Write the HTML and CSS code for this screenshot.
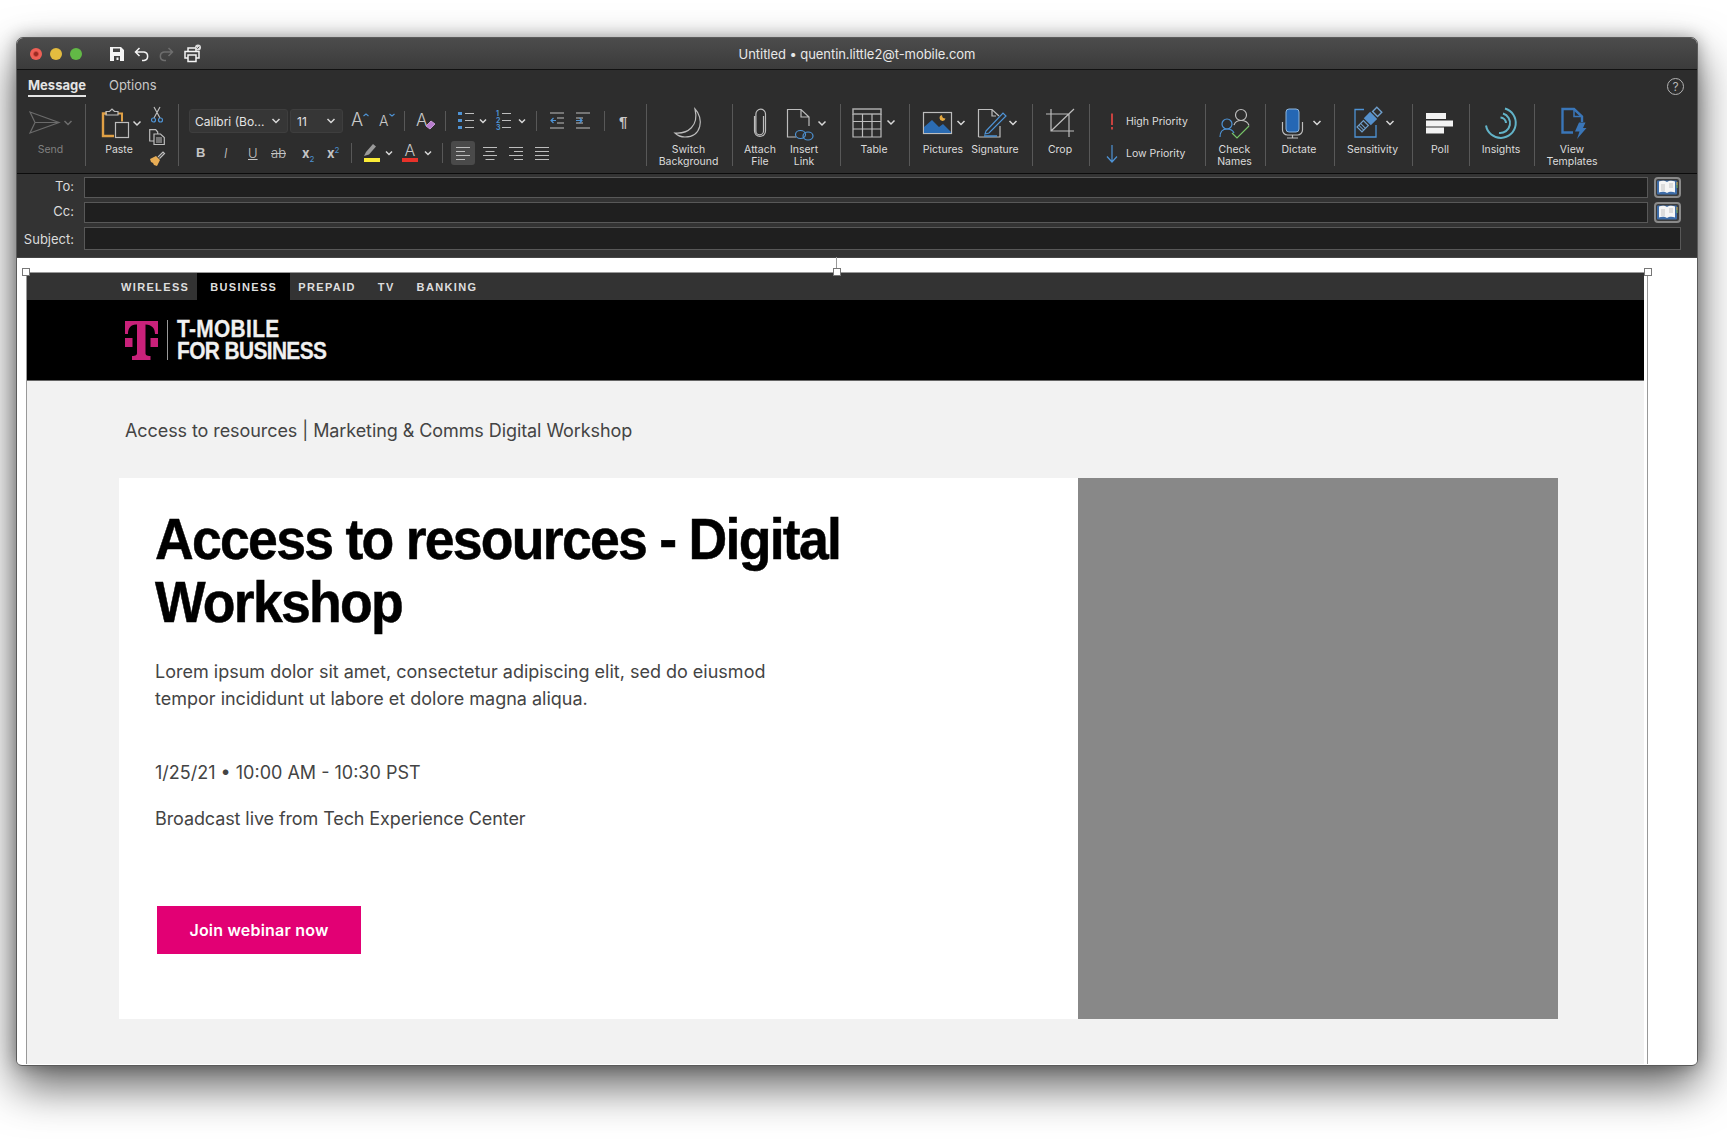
FILE: index.html
```html
<!DOCTYPE html>
<html lang="en">

<head>
    <meta charset="UTF-8">
    <title>Untitled</title>
    <link rel="stylesheet" href="styles.css">
</head>

<body>
    <div class="window">
        <!-- title bar -->
        <div class="titlebar">
            <div class="lights">
                <span class="light red"></span>
                <span class="light yellow"></span>
                <span class="light green"></span>
            </div>
            <div class="quick">
                <svg class="q-save" width="14" height="14" viewBox="0 0 14 14"><path fill="#f4f4f4" fill-rule="evenodd" d="M0 0h11l3 3v11H0zM3 1.500v3.500h7V1.500zM4 9v5h6V9z"/><rect x="6.500" y="10.500" width="2" height="2.500" fill="#f4f4f4"/></svg>
                <svg class="q-undo" width="16" height="14" viewBox="0 0 16 14"><path class="q-line" d="M5.500 1 1.500 5l4 4M1.500 5H10a4.300 4.300 0 0 1 0 8.500H8"/></svg>
                <svg class="q-redo" width="16" height="14" viewBox="0 0 16 14"><path class="q-line dim" d="M10.500 1l4 4-4 4M14.500 5H6a4.300 4.300 0 0 0 0 8.500h2"/></svg>
                <svg class="q-print" width="18" height="19" viewBox="0 0 18 19"><path class="q-line" d="M4 7V4h8v3M4 14H1V7.500h14V14h-3M4 11h8v6.500H4z"/><circle cx="14" cy="3.500" r="3" fill="#ddd"/><path d="M12.600 3.500l1 1 1.600-1.800" fill="none" stroke="#333" stroke-width=".9"/></svg>
            </div>
            <div class="title">Untitled • quentin.little2@t-mobile.com</div>
        </div>

        <!-- ribbon tabs -->
        <div class="tabs">
            <span class="tab active">Message</span>
            <span class="tab">Options</span>
            <span class="help">?</span>
        </div>

        <!-- ribbon -->
        <div class="ribbon">
            <div class="group g-send">
                <div class="tool w-full dim-label">
                    <svg width="67" height="30" viewBox="0 0 67 30"><path class="ln dim" d="M13 4l29 10.500L13 25l5-10.500zM18 14.500h24"/><path class="chev dim" d="M47.500 13l3.500 3.500 3.500-3.500"/></svg>
                    <span class="label">Send</span>
                </div>
            </div>

            <div class="group g-paste">
                <div class="tool w-paste">
                    <svg width="58" height="30" viewBox="0 0 58 30">
                        <path d="M17 5.500H13V28H24" fill="none" stroke="#e0a045" stroke-width="2.400"/>
                        <path d="M28 5.500h4v8" fill="none" stroke="#e0a045" stroke-width="2"/>
                        <path class="ln" d="M16 7V3.500h3.500L22 1l2.500 2.500H28V7z"/>
                        <rect class="ln" x="25.500" y="14.500" width="13" height="15"/>
                        <path class="chev" d="M43.500 13.500l3.500 3.500 3.500-3.500"/>
                    </svg>
                    <span class="label">Paste</span>
                </div>
                <div class="side">
                    <svg width="16" height="16" viewBox="0 0 16 16"><path class="ln" d="M5 0l6 11M11 0L5 11"/><circle class="ln-blue" cx="4.500" cy="13" r="2"/><circle class="ln-blue" cx="11.500" cy="13" r="2"/></svg>
                    <svg width="16" height="16" viewBox="0 0 16 16"><path class="ln" d="M5 12H.7V.7h6l2 2.300v2M5 5h6.500l3.800 3.500v7H5zM7 9h6M7 11h6M7 13h6"/></svg>
                    <svg width="16" height="16" viewBox="0 0 16 16"><path d="M1 8l6-3 4 4-3 6-3-1-1-2-2-1z" fill="#e8ad55"/><path class="ln" d="M9 6l5-5 1.500 1.500-5 5"/></svg>
                </div>
            </div>

            <!-- font and paragraph block -->
            <div class="group g-font">
                <div class="row">
                    <div class="select s-font">Calibri (Bo...<svg class="sel-chev" width="8" height="6" viewBox="0 0 8 6"><path class="chev" d="M.5 1l3.500 3.500L7.500 1"/></svg></div>
                    <div class="select s-size">11<svg class="sel-chev" width="8" height="6" viewBox="0 0 8 6"><path class="chev" d="M.5 1l3.500 3.500L7.500 1"/></svg></div>
                    <svg class="a-grow" width="28" height="24" viewBox="0 0 28 24"><text class="glyph-a" x="0" y="17" font-size="18">A</text><path class="chev-blue" d="M12.500 7l2.500-2 2.500 2"/></svg>
                    <svg width="25" height="24" viewBox="0 0 25 24"><text class="glyph-a" x="0" y="17" font-size="14">A</text><path class="chev-blue" d="M10.500 5l2.500 2 2.500-2"/></svg>
                    <span class="vsep"></span>
                    <svg width="40" height="24" viewBox="0 0 40 24"><text class="glyph-a" x="11" y="17" font-size="17">A</text><path d="M21 17l5-5 4 3-5 5z" fill="#b77ccd" stroke="#c79ad8" stroke-width="1"/></svg>
                    <span class="vsep"></span>
                    <svg width="50" height="24" viewBox="0 0 50 24">
                        <path d="M12 3h4v3h-4zM12 10h4v3h-4zM12 17h4v3h-4z" fill="#4e93d5"/>
                        <path class="ln" d="M19 4.500h9M19 11.500h9M19 18.500h9"/>
                        <path class="chev" d="M34 10.500l3 3 3-3"/>
                    </svg>
                    <svg width="40" height="24" viewBox="0 0 40 24">
                        <text class="num-blue" x="0" y="7">1</text><text class="num-blue" x="0" y="14">2</text><text class="num-blue" x="0" y="21">3</text>
                        <path class="ln" d="M6 4.500h9M6 11.500h9M6 18.500h9"/>
                        <path class="chev" d="M23 10.500l3 3 3-3"/>
                    </svg>
                    <span class="vsep"></span>
                    <svg width="39" height="24" viewBox="0 0 39 24">
                        <path class="ln" d="M13 4h14M20 9h7M20 14h7M13 19h14"/>
                        <path class="ln-blue" d="M19 11.500h-5M16.500 9l-2.500 2.500 2.500 2.500"/>
                    </svg>
                    <svg width="28" height="24" viewBox="0 0 28 24">
                        <path class="ln" d="M0 4h14M7 9h7M7 14h7M0 19h14" transform="matrix(-1 0 0 1 14 0)"/>
                        <path class="ln-blue" d="M0 11.500h6M3.500 9L6 11.500 3.500 14"/>
                    </svg>
                    <span class="vsep"></span>
                    <span class="pilcrow">¶</span>
                </div>
                <div class="row row-2">
                    <span class="fmt f-b">B</span>
                    <span class="fmt f-i">I</span>
                    <span class="fmt f-u">U</span>
                    <span class="fmt f-s">ab</span>
                    <span class="fmt f-x">x<sub>2</sub></span>
                    <span class="fmt f-x2">x<sup>2</sup></span>
                    <span class="vsep"></span>
                    <svg width="50" height="24" viewBox="0 0 50 24">
                        <path d="M12 15l2-4 7-8 3 2.500-7 8z" fill="#9a9a9a"/>
                        <rect x="12" y="17" width="16" height="4" fill="#fbec37"/>
                        <path class="chev" d="M34 10.500l3 3 3-3"/>
                    </svg>
                    <svg width="40" height="24" viewBox="0 0 40 24">
                        <text class="glyph-a" x="2.500" y="15" font-size="16">A</text>
                        <rect y="17" width="16" height="4" fill="#e8322a"/>
                        <path class="chev" d="M23 10.500l3 3 3-3"/>
                    </svg>
                    <span class="vsep"></span>
                    <span class="align first on"><svg width="14" height="14" viewBox="0 0 14 14"><path class="ln" d="M0 1.500h14M0 5.500h9M0 9.500h14M0 13.500h9"/></svg></span>
                    <span class="align"><svg width="14" height="14" viewBox="0 0 14 14"><path class="ln" d="M0 1.500h14M2.500 5.500h9M0 9.500h14M2.500 13.500h9"/></svg></span>
                    <span class="align"><svg width="14" height="14" viewBox="0 0 14 14"><path class="ln" d="M0 1.500h14M5 5.500h9M0 9.500h14M5 13.500h9"/></svg></span>
                    <span class="align"><svg width="14" height="14" viewBox="0 0 14 14"><path class="ln" d="M0 1.500h14M0 5.500h14M0 9.500h14M0 13.500h14"/></svg></span>
                </div>
            </div>

            <div class="group g-bg">
                <div class="tool w-full">
                    <svg width="85" height="30" viewBox="0 0 85 30"><path class="ln" d="M49 1c9 9 7 28-10 28-4 0-8-2-10-4 13 1 24-7 20-24z"/></svg>
                    <span class="label">Switch<br>Background</span>
                </div>
            </div>

            <div class="group g-attach">
                <div class="tool w-44">
                    <svg width="44" height="30" viewBox="0 0 44 30"><path class="ln" d="M25.500 8v15a3.800 3.800 0 0 1-7.600 0V6a4.800 4.800 0 0 1 9.600 0v17a5.500 5.500 0 0 1-11 0V8"/></svg>
                    <span class="label">Attach<br>File</span>
                </div>
                <div class="tool w-44">
                    <svg width="44" height="30" viewBox="0 0 44 30">
                        <path class="ln" d="M14 29H5.500V1.500H19L27 9v9M19 1.500V9h8"/>
                        <ellipse class="ln-blue" cx="18.500" cy="26.500" rx="5" ry="4"/>
                        <ellipse class="ln-blue" cx="26" cy="28" rx="5" ry="4"/>
                        <path class="chev" d="M36.500 13.500l3.500 3.500 3.500-3.500"/>
                    </svg>
                    <span class="label">Insert<br>Link</span>
                </div>
            </div>

            <div class="group g-table">
                <div class="tool w-full">
                    <svg width="68" height="30" viewBox="0 0 68 30">
                        <rect x="13" y="1" width="28" height="5" fill="none" stroke="#aaa" stroke-width="1.500"/>
                        <path class="ln" d="M13 6v23h28V6M13 13.500h28M13 21h28M22.500 6v23M32 6v23"/>
                        <path class="chev" d="M47.500 12.500l3.500 3.500 3.500-3.500"/>
                    </svg>
                    <span class="label">Table</span>
                </div>
            </div>

            <div class="group g-pict">
                <div class="tool w-52">
                    <svg width="52" height="30" viewBox="0 0 52 30">
                        <rect class="ln" x="6.500" y="4.500" width="28" height="21"/>
                        <path d="M7 25V19l8-7 7 7 4-3 8 8v1z" fill="#2b6cb3"/>
                        <path d="M25 7a3 3 0 1 0 3.500 3.500A3.500 3.500 0 0 1 25 7z" fill="#e6a93f"/>
                        <path class="chev" d="M40.500 13l3.500 3.500 3.500-3.500"/>
                    </svg>
                    <span class="label">Pictures</span>
                </div>
                <div class="tool w-52">
                    <svg width="52" height="30" viewBox="0 0 52 30">
                        <path class="ln" d="M9.500 29V1.500H23L30 8M23 1.500V8h4M31 18v11H9.500"/>
                        <path class="ln-blue" d="M17 23l17-18 3 3-17 17-4 1z"/>
                        <path d="M15 28h13" stroke="#4e93d5" stroke-width="1.500"/>
                        <path class="chev" d="M40.500 13l3.500 3.500 3.500-3.500"/>
                    </svg>
                    <span class="label">Signature</span>
                </div>
            </div>

            <div class="group g-crop">
                <div class="tool w-full">
                    <svg width="56" height="30" viewBox="0 0 56 30"><path class="ln" d="M19 1v22h23M14 6h23v23M19 23L42 1"/></svg>
                    <span class="label">Crop</span>
                </div>
            </div>

            <div class="group g-prio">
                <div class="prio">
                    <svg width="16" height="20" viewBox="0 0 16 20"><path d="M8 1.500v11.500M8 15v2.500" stroke="#c8423f" stroke-width="2"/></svg>
                    <span class="label">High Priority</span>
                </div>
                <div class="prio">
                    <svg width="16" height="20" viewBox="0 0 16 20"><path class="ln-blue" d="M8 1v17M3 12.500 8 18l5-5.500"/></svg>
                    <span class="label">Low Priority</span>
                </div>
            </div>

            <div class="group g-check">
                <div class="tool w-full">
                    <svg width="59" height="30" viewBox="0 0 59 30">
                        <circle class="ln-blue" cx="22" cy="16" r="5"/>
                        <path class="ln-blue" d="M15 29c0-6 3-8 7-8s6 1.500 7 4"/>
                        <circle class="ln" cx="36" cy="7" r="5.500"/>
                        <path class="ln" d="M29 17c1-3 3-4.500 7-4.500s7 2 8 5"/>
                        <path d="M27 25l5 5 12-12" fill="none" stroke="#76c267" stroke-width="1.200"/>
                    </svg>
                    <span class="label">Check<br>Names</span>
                </div>
            </div>

            <div class="group g-dict">
                <div class="tool w-full">
                    <svg width="68" height="30" viewBox="0 0 68 30">
                        <rect x="21" y="1" width="13" height="23" rx="3" fill="#2567b4" stroke="#8fb6dc" stroke-width="1"/>
                        <path class="ln" d="M17.500 14v8a5 5 0 0 0 5 5h10a5 5 0 0 0 5-5v-8M27.500 27v3M22 30h11"/>
                        <path class="chev" d="M48.500 13l3.500 3.500 3.500-3.500"/>
                    </svg>
                    <span class="label">Dictate</span>
                </div>
            </div>

            <div class="group g-sens">
                <div class="tool w-full">
                    <svg width="77" height="30" viewBox="0 0 77 30">
                        <path d="M30 1.500h-9v27.500h21V17" fill="none" stroke="#4e93d5" stroke-width="1.300"/>
                        <g transform="rotate(-45 34 13)">
                            <rect x="22" y="9.500" width="9" height="7" fill="none" stroke="#6f9fcc" stroke-width="1.200"/>
                            <path d="M24.500 9.500v7M27 9.500v7" stroke="#6f9fcc" stroke-width="1"/>
                            <rect x="33" y="8" width="9" height="10" fill="#5591cd"/>
                            <rect x="44" y="9.500" width="6" height="7" fill="none" stroke="#6f9fcc" stroke-width="1.400"/>
                        </g>
                        <path class="chev" d="M52.500 13l3.500 3.500 3.500-3.500"/>
                    </svg>
                    <span class="label">Sensitivity</span>
                </div>
            </div>

            <div class="group g-poll">
                <div class="tool w-full">
                    <svg width="56" height="30" viewBox="0 0 56 30"><path d="M14 5h20v6H14zM14 12.500h27v6H14zM14 19.500h18v6H14z" fill="#f2f2f2"/></svg>
                    <span class="label">Poll</span>
                </div>
            </div>

            <div class="group g-insi">
                <div class="tool w-full">
                    <svg width="64" height="30" viewBox="0 0 64 30">
                        <path class="teal" d="M36 .500A15 15 0 1 1 17 17.500"/>
                        <path class="teal" d="M34 5.500A10 10 0 0 1 30 25"/>
                        <path class="teal" d="M31.500 9.500A6 6 0 0 1 37 15"/>
                    </svg>
                    <span class="label">Insights</span>
                </div>
            </div>

            <div class="group g-view last">
                <div class="tool w-full">
                    <svg width="75" height="30" viewBox="0 0 75 30">
                        <path d="M38 24.500H27.500V1H39l8 7.500V14" fill="none" stroke="#3a76b8" stroke-width="2.400"/>
                        <path d="M39 1v7.500h8" fill="none" stroke="#3a76b8" stroke-width="1.500"/>
                        <path d="M44 14.500h6.500L48 20h3.500L42 31l2.500-7.500H40z" fill="#3a76b8"/>
                    </svg>
                    <span class="label">View<br>Templates</span>
                </div>
            </div>
        </div>

        <!-- address fields -->
        <div class="address">
            <div class="addr-row">
                <label>To:</label>
                <div class="field"></div>
                <div class="book"><svg width="21" height="15" viewBox="0 0 21 15"><rect width="20" height="14" y=".500" rx="1" fill="#3d6ca8"/><path d="M2 1.500c2.500-1 6-1 8 .500v11c-2-1.500-5.500-1.500-8-.500zM10 2c2-1.500 5.500-1.500 8-.500v11c-2.500-1-6-1-8 .500z" fill="#f5f5f5"/><path d="M4 4h4v7H4zM12 3h4v5h-4z" fill="#dcdcdc"/><path d="M20 2v3" stroke="#d7b54a"/><path d="M20 5v3" stroke="#74b25a"/></svg></div>
            </div>
            <div class="addr-row">
                <label>Cc:</label>
                <div class="field"></div>
                <div class="book"><svg width="21" height="15" viewBox="0 0 21 15"><rect width="20" height="14" y=".500" rx="1" fill="#3d6ca8"/><path d="M2 1.500c2.500-1 6-1 8 .500v11c-2-1.500-5.500-1.500-8-.500zM10 2c2-1.500 5.500-1.500 8-.500v11c-2.500-1-6-1-8 .500z" fill="#f5f5f5"/><path d="M4 4h4v7H4zM12 3h4v5h-4z" fill="#dcdcdc"/><path d="M20 2v3" stroke="#d7b54a"/><path d="M20 5v3" stroke="#74b25a"/></svg></div>
            </div>
            <div class="addr-row subject">
                <label>Subject:</label>
                <div class="field"></div>
            </div>
        </div>

        <!-- message body -->
        <div class="compose">
            <div class="frame">
                <span class="handle h-left"></span>
                <span class="handle h-mid"></span>
                <span class="handle h-right"></span>
                <div class="email">
                    <div class="nav">
                        <span class="nav-item first">WIRELESS</span>
                        <span class="nav-item active">BUSINESS</span>
                        <span class="nav-item">PREPAID</span>
                        <span class="nav-item">TV</span>
                        <span class="nav-item">BANKING</span>
                    </div>
                    <div class="brand">
                        <svg class="t-mark" width="33" height="39" viewBox="0 0 33 39"><path d="M0 0h33v13h-3c0-6-3-9-9.500-9.500V32c0 2 1 3 5 3v4H7v-4c4 0 5-1 5-3V3.500C6 3 3 7 3 13H0z" fill="#c9217a"/><path d="M0 17h7.500v9H0zM25.500 17H33v9h-7.500z" fill="#c9217a"/></svg>
                        <span class="brand-line"></span>
                        <div class="brand-name"><span class="brand-top">T-MOBILE</span><span class="brand-bottom">FOR BUSINESS</span></div>
                    </div>
                    <div class="content">
                        <p class="preheader">Access to resources | Marketing &amp; Comms Digital Workshop</p>
                        <div class="card">
                            <div class="card-text">
                                <h1>Access to resources - Digital Workshop</h1>
                                <p class="lead">Lorem ipsum dolor sit amet, consectetur adipiscing elit, sed do eiusmod tempor incididunt ut labore et dolore magna aliqua.</p>
                                <p class="when">1/25/21 • 10:00 AM - 10:30 PST</p>
                                <p class="where">Broadcast live from Tech Experience Center</p>
                                <a class="join" href="#">Join webinar now</a>
                            </div>
                            <div class="card-image"></div>
                        </div>
                    </div>
                </div>
            </div>
        </div>
    </div>
</body>

</html>
```

FILE: styles.css
```css
* {
    box-sizing: border-box;
}

body {
    margin: 0;
    height: 1139px;
    overflow: hidden;
    background-color: #fff;
    font-family: "Inter", "Liberation Sans", sans-serif;
}

svg {
    display: block;
    overflow: visible;
    flex: none;
}

/* svg stroke helpers */
.ln, .ln-blue, .chev, .chev-blue, .teal {
    fill: none;
}

.ln {
    stroke: #bdbdbd;
    stroke-width: 1.2;
}

.ln.dim {
    stroke: #6a6a6a;
}

.ln-blue {
    stroke: #4e93d5;
    stroke-width: 1.2;
}

.chev {
    stroke: #d8d8d8;
    stroke-width: 1.5;
}

.chev.dim {
    stroke: #6e6e6e;
}

.chev-blue {
    stroke: #4e93d5;
    stroke-width: 1.1;
}

.teal {
    stroke: #62b3c8;
    stroke-width: 2;
}

.glyph-a {
    fill: #c8c8c8;
    font-family: "Inter", sans-serif;
    font-weight: 300;
}

.num-blue {
    fill: #4e93d5;
    font-size: 7px;
    font-weight: 700;
}

/* window */
.window {
    position: relative;
    width: 1682px;
    height: 1029px;
    margin: 37px 0 0 16px;
    border: 1px solid #5a5a5a;
    border-radius: 7px 7px 6px 6px;
    overflow: hidden;
    background-color: #fff;
    box-shadow: 0 20px 45px rgba(0, 0, 0, .62), 0 0 16px rgba(0, 0, 0, .3);
}

.titlebar {
    display: flex;
    align-items: center;
    position: relative;
    height: 32px;
    border-bottom: 1px solid #111;
    background: linear-gradient(#4c4c4c, #3b3b3b);
}

.lights {
    display: flex;
    gap: 8px;
    margin-left: 13px;
}

.light {
    width: 12px;
    height: 12px;
    border-radius: 50%;
}

.red {
    background: radial-gradient(#9c2a22 18%, #ee5f55 38%);
}

.yellow {
    background-color: #e3bc3f;
}

.green {
    background-color: #62b946;
}

.quick {
    display: flex;
    align-items: center;
    margin-left: 28px;
}

.q-line {
    fill: none;
    stroke: #f4f4f4;
    stroke-width: 1.500;
}

.q-line.dim {
    stroke: #6e6e6e;
}

.q-undo {
    margin-left: 10px;
}

.q-redo {
    margin-left: 8px;
}

.q-print {
    margin-left: 10px;
}

.title {
    position: absolute;
    left: 0;
    right: 0;
    text-align: center;
    font-size: 13px;
    letter-spacing: -.06px;
    color: #e8e8e8;
}

/* tabs */
.tabs {
    display: flex;
    align-items: flex-start;
    height: 34px;
    padding: 8px 13px 0 11px;
    background-color: #2d2d2d;
}

.tab {
    height: 19px;
    margin-right: 23px;
    font-size: 13px;
    line-height: 15px;
    color: #c8c8c8;
}

.tab.active {
    font-weight: 700;
    color: #e4e4e4;
    border-bottom: 2px solid #e4e4e4;
}

.help {
    width: 17px;
    height: 17px;
    margin-left: auto;
    border: 1px solid #b4b4b4;
    border-radius: 50%;
    font-size: 12px;
    line-height: 15px;
    text-align: center;
    color: #b4b4b4;
}

/* ribbon */
.ribbon {
    display: flex;
    height: 70px;
    padding-left: 1px;
    border-bottom: 1px solid #0c0c0c;
    background-color: #2d2d2d;
}

.group {
    height: 62px;
    border-right: 1px solid #585858;
    display: flex;
    flex: none;
}

.group.last {
    border-right: 0;
}

.g-send { width: 68px; }
.g-paste { width: 93px; padding-left: 5px; }
.g-font { width: 468px; display: block; padding: 5px 0 0 10px; }
.g-bg { width: 86px; }
.g-attach { width: 108px; padding-left: 6px; }
.g-table { width: 69px; }
.g-pict { width: 123px; padding-left: 8px; }
.g-crop { width: 57px; }
.g-prio { width: 116px; display: block; padding: 8px 0 0 14px; }
.g-check { width: 60px; }
.g-dict { width: 69px; }
.g-sens { width: 78px; }
.g-poll { width: 57px; }
.g-insi { width: 65px; }
.g-view { width: 76px; }

.tool {
    display: flex;
    flex-direction: column;
    align-items: center;
    padding: 4px 2px 0 0;
}

.w-full { width: 100%; }
.w-paste { width: 58px; }
.w-44 { width: 44px; }
.w-52 { width: 52px; }

.label {
    margin-top: 6px;
    font-size: 10.500px;
    line-height: 12px;
    text-align: center;
    white-space: nowrap;
    color: #dcdcdc;
}

.dim-label .label {
    color: #808080;
}

.side {
    display: flex;
    flex-direction: column;
    gap: 6px;
    width: 16px;
    margin-top: 3px;
}

.prio {
    display: flex;
    align-items: center;
    gap: 6px;
    height: 20px;
    margin-bottom: 12px;
}

.prio .label {
    margin-top: 0;
}

/* font block */
.row {
    display: flex;
    align-items: center;
    height: 24px;
}

.row-2 {
    margin-top: 8px;
}

.select {
    display: flex;
    align-items: center;
    justify-content: space-between;
    height: 24px;
    padding: 0 7px 0 5px;
    border: 1px solid #3e3e3e;
    border-radius: 3px;
    background-color: #363636;
    font-size: 12px;
    color: #e4e4e4;
}

.s-font { width: 99px; }
.s-size { width: 53px; margin-left: 2px; padding-left: 6px; }
.a-grow { margin-left: 8px; }

.vsep {
    flex: none;
    width: 1px;
    height: 20px;
    background-color: #585858;
}

.pilcrow {
    margin-left: 14px;
    font-size: 15px;
    font-weight: 700;
    font-family: "Liberation Sans", sans-serif;
    color: #c8c8c8;
}

.fmt {
    flex: none;
    padding-left: 7px;
    font-size: 13px;
    line-height: 24px;
    color: #c4c4c4;
}

.fmt sub, .fmt sup {
    font-size: 8px;
    font-weight: 400;
    line-height: 0;
    color: #4e93d5;
}

.f-b { width: 34px; font-weight: 700; font-family: "Liberation Sans", sans-serif; }
.f-i { width: 25px; padding-left: 1px; font-style: italic; font-weight: 300; }
.f-u { width: 23px; padding-left: 0; text-decoration: underline; font-weight: 300; }
.f-s { width: 31px; padding-left: 0; text-decoration: line-through; font-weight: 300; }
.f-x { width: 25px; padding-left: 0; font-weight: 700; }
.f-x2 { width: 24px; padding-left: 0; font-weight: 700; }

.align {
    display: flex;
    align-items: center;
    justify-content: center;
    width: 26px;
    height: 24px;
}

.align.first {
    width: 24px;
    margin: 0 2px 0 8px;
}

.align.on {
    border-radius: 3px;
    background-color: #4a4a4a;
}

/* address fields */
.address {
    height: 84px;
    padding-top: 3px;
    border-bottom: 1px solid #444;
    background-color: #333;
}

.addr-row {
    display: flex;
    align-items: center;
    height: 21px;
    margin-bottom: 4px;
}

.addr-row label {
    width: 57px;
    margin-top: -3px;
    font-size: 13px;
    text-align: right;
    color: #dcdcdc;
}

.field {
    width: 1564px;
    height: 21px;
    margin-left: 10px;
    border: 1px solid #585858;
    background-color: #1f1f1f;
}

.subject {
    height: 23px;
}

.subject label {
    margin-top: 0;
}

.subject .field {
    width: 1597px;
    height: 23px;
}

.book {
    display: flex;
    align-items: center;
    justify-content: center;
    width: 27px;
    height: 21px;
    margin-left: 6px;
    border: 2px solid #8a8a8a;
    border-radius: 4px;
    background-color: #3c3c3c;
}

/* message body */
.compose {
    height: 806px;
    padding: 14px 0 0 9px;
    background-color: #fff;
}

.frame {
    position: relative;
    width: 1622px;
    height: 792px;
    border: 1px solid #999;
    border-bottom: 0;
}

.handle {
    position: absolute;
    top: -5px;
    width: 8px;
    height: 8px;
    border: 1px solid #777;
    background-color: #fff;
    z-index: 2;
}

.h-left { left: -5px; }
.h-mid { left: 806px; }
.h-right { right: -5px; }

.h-mid::before {
    content: "";
    position: absolute;
    left: 2px;
    top: -12px;
    width: 1px;
    height: 11px;
    background-color: #999;
}

.email {
    width: 1617px;
    height: 791px;
    overflow: hidden;
}

.nav {
    display: flex;
    align-items: center;
    height: 27px;
    padding-left: 86px;
    background-color: #333;
}

.nav-item {
    height: 27px;
    padding: 0 14px 0 8px;
    font-family: "Liberation Sans", sans-serif;
    font-size: 11px;
    font-weight: 700;
    line-height: 28px;
    letter-spacing: 1.350px;
    color: #dedede;
}

.nav-item.first {
    padding-right: 8px;
}

.nav-item.active {
    padding: 0 13px;
    background-color: #000;
}

.brand {
    display: flex;
    align-items: center;
    height: 81px;
    padding-left: 98px;
    border-bottom: 1px solid #666;
    background-color: #000;
}

.brand-line {
    width: 1px;
    height: 40px;
    margin-left: 9px;
    background-color: #999;
}

.brand-name {
    margin-left: 9px;
    font-family: "Liberation Sans", sans-serif;
    font-size: 24px;
    font-weight: 700;
    line-height: 22px;
    white-space: nowrap;
    color: #f0f0f0;
    -webkit-text-stroke: .3px #f0f0f0;
    transform: scaleX(.87);
    transform-origin: left center;
}

.brand-top, .brand-bottom {
    display: block;
}

.brand-top {
    letter-spacing: .4px;
}

.brand-bottom {
    letter-spacing: -.7px;
}

.content {
    height: 684px;
    padding: 38px 0 0 92px;
    background-color: #f2f2f2;
}

.preheader {
    margin: 0 0 0 6px;
    height: 59px;
    font-size: 18px;
    line-height: 24px;
    letter-spacing: -.08px;
    color: #444;
}

.card {
    display: flex;
    width: 1439px;
    height: 541px;
    background-color: #fff;
}

.card-text {
    width: 959px;
    padding: 30px 0 0 36px;
}

.card-image {
    width: 480px;
    background-color: #888;
}

h1 {
    width: 790px;
    margin: 0;
    font-family: "Liberation Sans", sans-serif;
    font-size: 57px;
    font-weight: 700;
    line-height: 63px;
    letter-spacing: -1.850px;
    color: #000;
    -webkit-text-stroke: .5px #000;
    transform: scaleX(.94);
    transform-origin: left center;
}

.lead {
    width: 640px;
    margin: 24px 0 0;
    font-size: 18px;
    line-height: 27px;
    color: #444;
}

.when, .where {
    margin: 0;
    font-size: 18px;
    line-height: 24px;
    color: #444;
}

.when {
    margin-top: 49px;
}

.where {
    margin-top: 22px;
    letter-spacing: -.1px;
}

.join {
    display: block;
    width: 204px;
    height: 48px;
    margin: 75px 0 0 2px;
    background-color: #e20074;
    font-size: 16px;
    font-weight: 600;
    line-height: 48px;
    text-align: center;
    text-decoration: none;
    letter-spacing: .2px;
    color: #fff;
}
```
